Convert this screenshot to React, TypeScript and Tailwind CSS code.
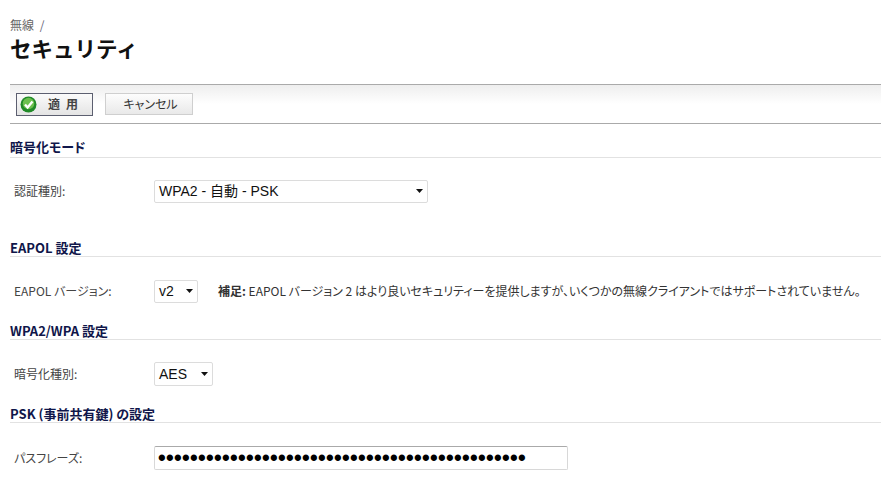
const jp = "font-['Noto_Sans_CJK_JP','Liberation_Sans',sans-serif]";

function Heading({ children, className = "" }: { children: React.ReactNode; className?: string }) {
  return (
    <div className={`h-[19px] border-b border-[#e2e2e2] text-[13px] leading-[16px] font-bold text-[#10164a] [font-feature-settings:'palt'] ${className}`}>
      {children}
    </div>
  );
}

function Select({ value, width, height, textSize }: { value: string; width: string; height: string; textSize: string }) {
  return (
    <div className={`flex items-center justify-between pl-1 pr-[4px] border border-[#dcdcdc] rounded-[2px] bg-white text-[#111] font-['Liberation_Sans','Noto_Sans_CJK_JP',sans-serif] ${width} ${height} ${textSize}`}>
      <span>{value}</span>
      <svg width="7" height="4" viewBox="0 0 7 4"><path d="M0 0h7L3.5 4z" fill="#111" /></svg>
    </div>
  );
}

function Label({ children }: { children: React.ReactNode }) {
  return <div className="w-[144px] pl-1 text-[12px] text-[#444] [font-feature-settings:'palt']">{children}</div>;
}

export default function App() {
  const dots = "•".repeat(46);
  return (
    <div className={`w-[881px] h-[497px] overflow-hidden bg-white pl-[10px] ${jp}`}>
      <div className="pt-[16px] h-[31px] text-[12px] leading-[18px] text-[#666]">
        無線 <span className="ml-[3px] text-[#667]">/</span>
      </div>
      <h1 className="h-[53px] text-[21.5px] leading-[34px] font-bold text-[#111]">セキュリティ</h1>
      <div className="h-[40px] border-y border-[#aaaaaa] bg-gradient-to-b from-[#eeeeee] via-white to-white flex items-center pl-[6px] gap-[12px]">
        <div className="w-[77px] h-[23px] border border-[#5c5f70] bg-gradient-to-b from-[#fbfbfb] to-[#e4e4e4] flex items-center pl-[3px]">
          <svg width="17" height="17" viewBox="0 0 17 17">
            <circle cx="8.5" cy="8.5" r="8" fill="#218a28" />
            <circle cx="8.5" cy="7.5" r="5.8" fill="#6cc04e" />
            <path d="M5 8.5l2.6 3L12.5 5.5" fill="none" stroke="#fff" strokeWidth="2.4" />
          </svg>
          <span className="ml-[11px] text-[12px] leading-none text-[#444] tracking-[6px] font-bold">適用</span>
        </div>
        <div className="w-[88px] h-[22px] border border-[#cfcfcf] bg-gradient-to-b from-[#fdfdfd] to-[#e9e9e9] flex items-center justify-center pl-[3px] text-[12px] text-[#333] [font-feature-settings:'palt']">
          キャンセル
        </div>
      </div>
      <Heading className="mt-[15px]">暗号化モード</Heading>
      <div className="flex items-center mt-[21px] h-[24px]">
        <Label>認証種別:</Label>
        <Select value="WPA2 - 自動 - PSK" width="w-[274px]" height="h-[23px]" textSize="text-[14px]" />
      </div>
      <Heading className="mt-[35px] pt-[2px]">EAPOL 設定</Heading>
      <div className="flex items-center mt-[22px] h-[24px]">
        <Label>EAPOL バージョン:</Label>
        <Select value="v2" width="w-[44px]" height="h-[23px]" textSize="text-[14px]" />
        <div className="ml-[20px] text-[12px] text-[#333] whitespace-nowrap [font-feature-settings:'palt']">
          <b className="text-[12px] text-[#333]">補足:</b> EAPOL バージョン 2 はより良いセキュリティーを提供しますが、いくつかの無線クライアントではサポートされていません。
        </div>
      </div>
      <Heading className="mt-[18px] pt-[2px]">WPA2/WPA 設定</Heading>
      <div className="flex items-center mt-[22px] h-[24px]">
        <Label>暗号化種別:</Label>
        <Select value="AES" width="w-[59px]" height="h-[24px]" textSize="text-[14px]" />
      </div>
      <Heading className="mt-[18px] pt-[2px]">PSK (事前共有鍵) の設定</Heading>
      <div className="flex items-center mt-[23px] h-[24px]">
        <Label>パスフレーズ:</Label>
        <div className="w-[414px] h-[24px] border border-[#d8d8d8] border-t-[#aaaaaa] rounded-[2px] pl-[3px] text-[22px] leading-[22px] font-bold text-black font-['Liberation_Sans',sans-serif] tracking-[0.3px] overflow-hidden whitespace-nowrap">
          {dots}
        </div>
      </div>
    </div>
  );
}
